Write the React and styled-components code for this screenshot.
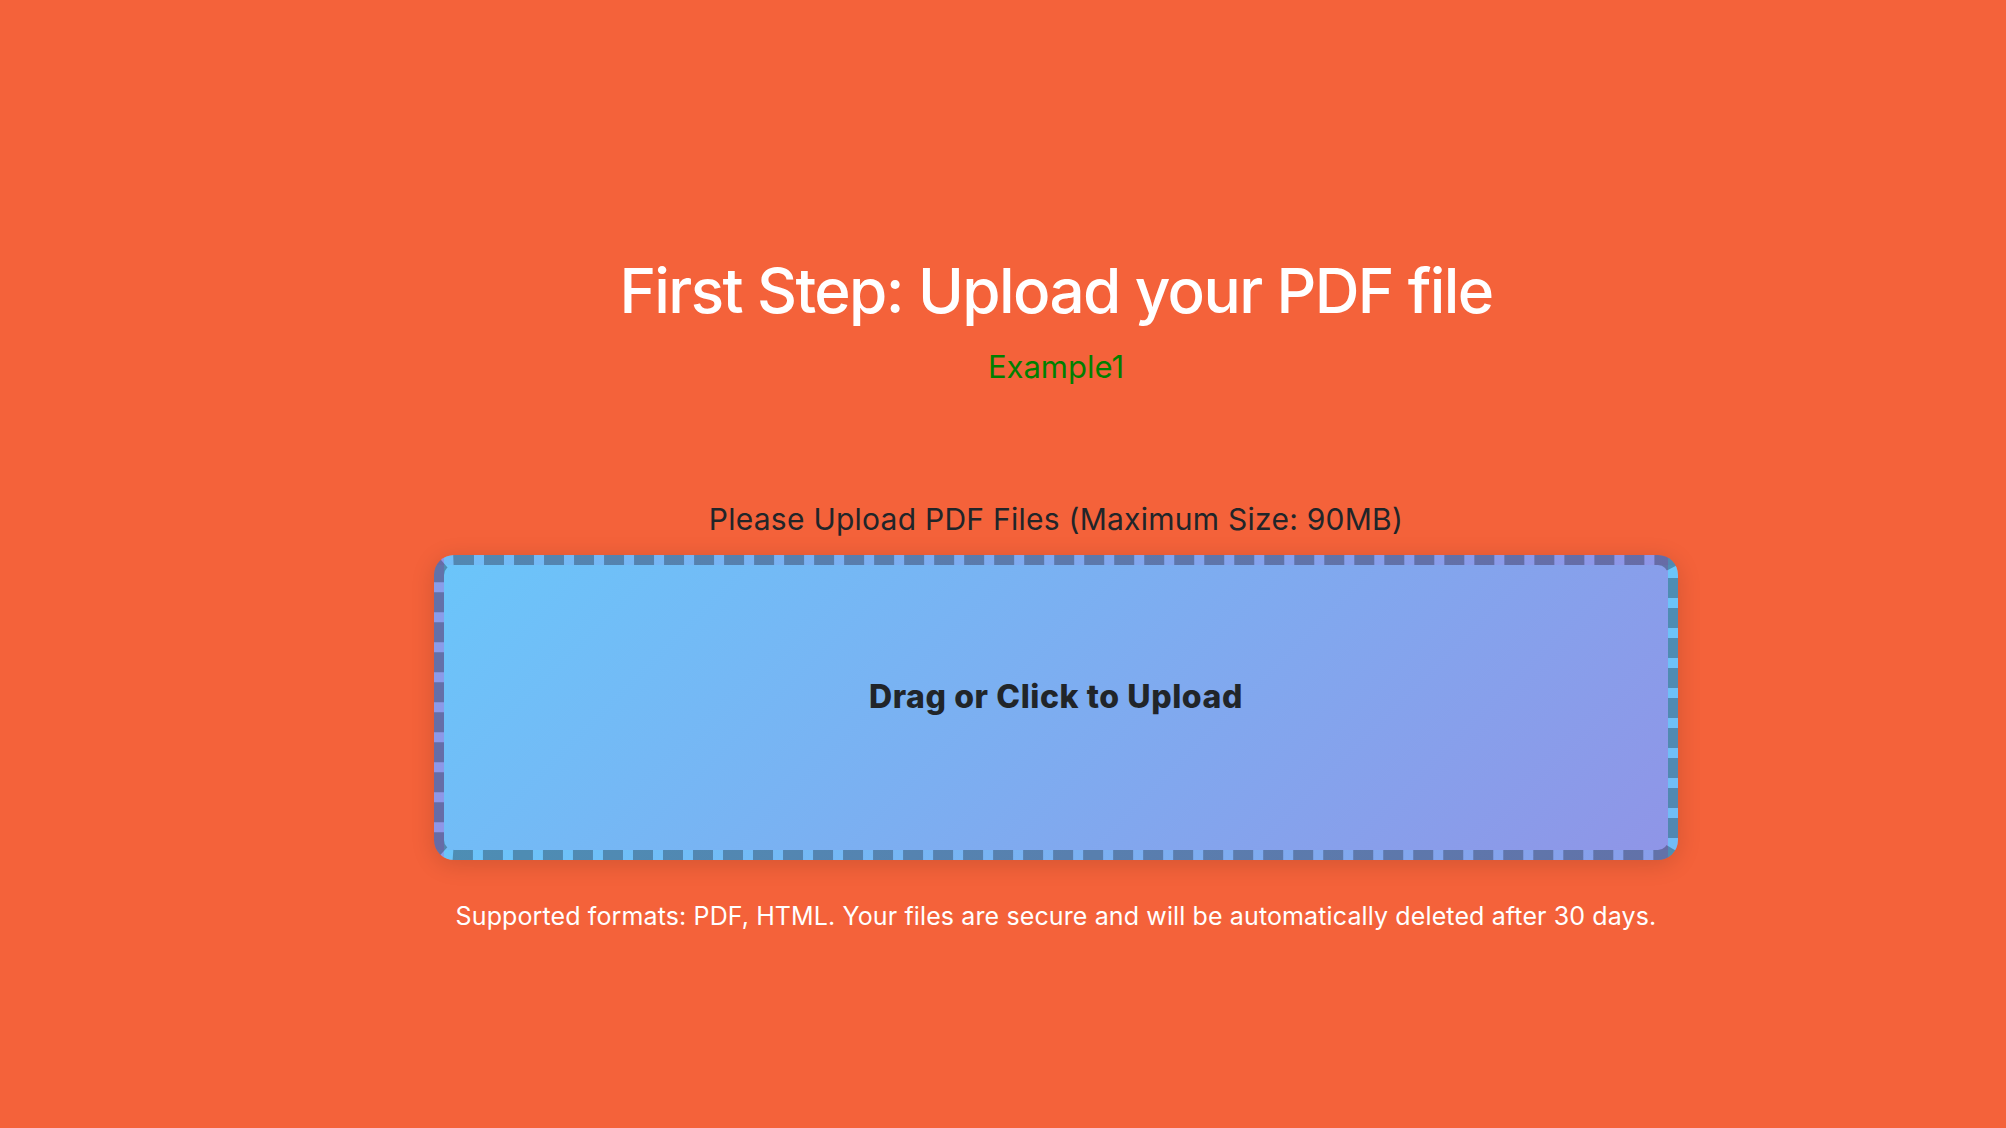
import React from 'react';
import styled, { createGlobalStyle } from 'styled-components';

const GlobalStyle = createGlobalStyle`
  html, body {
    margin: 0;
    padding: 0;
    background-color: #f4623a;
  }
  body {
    font-family: Inter, "Noto Sans", sans-serif;
    color: #212529;
  }
  * {
    box-sizing: border-box;
  }
`;

const Page = styled.div`
  min-height: 1128px;
  background-color: #f4623a;
  display: flex;
  justify-content: center;
  padding: 254px 0 0 106px;
`;

const Column = styled.main`
  width: 1244px;
  display: flex;
  flex-direction: column;
  align-items: center;
`;

const Title = styled.h1`
  margin: 0;
  color: #ffffff;
  font-size: 62px;
  font-weight: 500;
  line-height: 1.2;
  letter-spacing: -1.6px;
  white-space: nowrap;
`;

const Example = styled.div`
  margin-top: 20px;
  color: #008000;
  font-size: 31px;
  font-weight: 400;
  line-height: 1.2;
`;

const Label = styled.p`
  margin: 115px 0 18px;
  color: #212529;
  font-size: 30px;
  font-weight: 400;
  line-height: 1.2;
  letter-spacing: 0.25px;
`;

const DropZone = styled.label`
  width: 1244px;
  height: 305px;
  display: flex;
  align-items: center;
  justify-content: center;
  padding-bottom: 20px;
  border: 10px dashed rgba(0, 0, 0, 0.28);
  border-radius: 20px;
  background: linear-gradient(135deg, #6bc5fa 0%, #8f95e7 100%);
  box-shadow: 0 4px 24px rgba(0, 0, 0, 0.14);
  cursor: pointer;
`;

const DropText = styled.span`
  color: #212529;
  font-size: 32px;
  font-weight: 800;
  line-height: 1.2;
  letter-spacing: 0.6px;
`;

const HiddenInput = styled.input`
  display: none;
`;

const Note = styled.p`
  margin: 41px 0 0;
  color: #ffffff;
  font-size: 25px;
  font-weight: 400;
  line-height: 1.2;
  letter-spacing: 0.12px;
  white-space: nowrap;
`;

export default function App() {
  return (
    <>
      <GlobalStyle />
      <Page>
        <Column>
          <Title>First Step: Upload your PDF file</Title>
          <Example>Example1</Example>
          <Label>Please Upload PDF Files (Maximum Size: 90MB)</Label>
          <DropZone>
            <HiddenInput type="file" accept=".pdf,.html" />
            <DropText>Drag or Click to Upload</DropText>
          </DropZone>
          <Note>
            Supported formats: PDF, HTML. Your files are secure and will be automatically deleted after 30 days.
          </Note>
        </Column>
      </Page>
    </>
  );
}
